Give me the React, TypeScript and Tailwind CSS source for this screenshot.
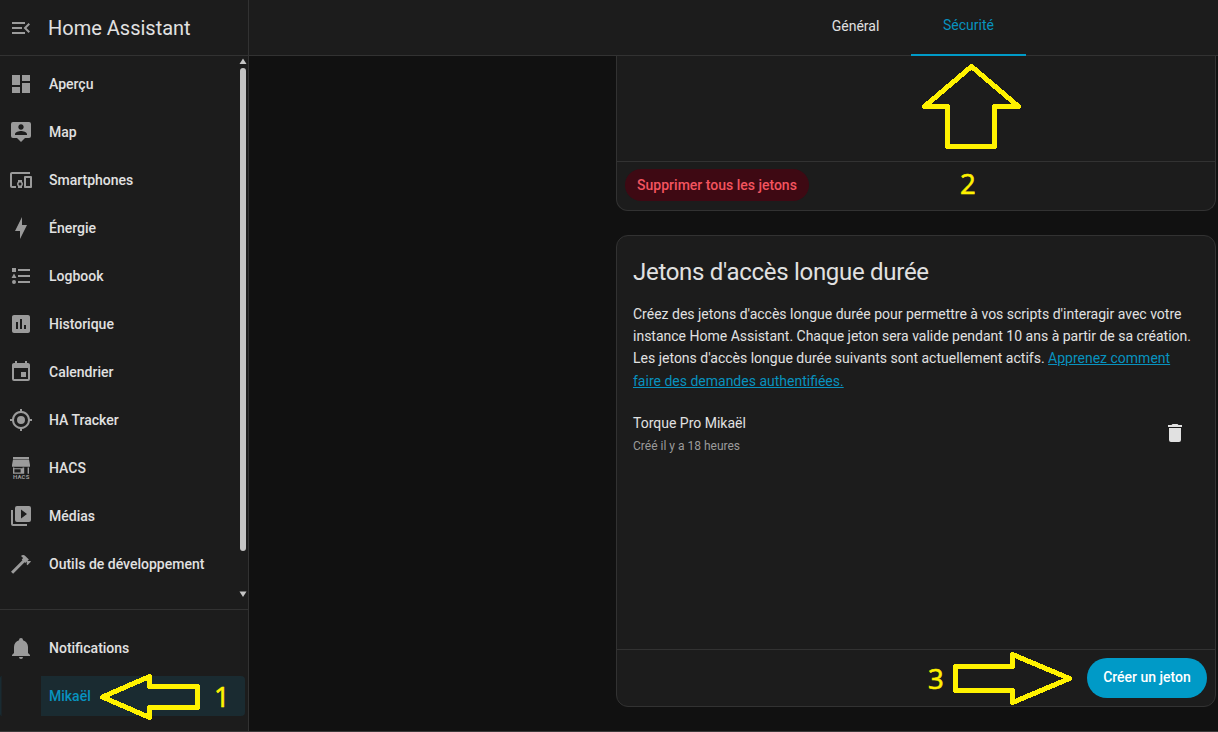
import type { ReactNode } from "react";

const icons = {
  menu: "M21,15.61L19.59,17L14.58,12L19.59,7L21,8.39L17.44,12L21,15.61M3,6H16V8H3V6M3,13V11H13V13H3M3,18V16H16V18H3Z",
  dashboard: "M13,3V9H21V3M13,21H21V11H13M3,21H11V15H3M3,13H11V3H3V13Z",
  map: "M20,2H4A2,2 0 0,0 2,4V16A2,2 0 0,0 4,18H8L12,22L16,18H20A2,2 0 0,0 22,16V4A2,2 0 0,0 20,2M12,4.3C13.5,4.3 14.7,5.5 14.7,7C14.7,8.5 13.5,9.7 12,9.7C10.5,9.7 9.3,8.5 9.3,7C9.3,5.5 10.5,4.3 12,4.3M18,15H6V14.1C6,12.1 10,11 12,11C14,11 18,12.1 18,14.1V15Z",
  devices:
    "M3 6h18V4H3c-1.1 0-2 .9-2 2v12c0 1.1.9 2 2 2h4v-2H3V6zm10 6H9v1.78c-.61.55-1 1.33-1 2.22s.39 1.67 1 2.22V20h4v-1.78c.61-.55 1-1.34 1-2.22s-.39-1.67-1-2.22V12zm-2 5.5c-.83 0-1.5-.67-1.5-1.5s.67-1.5 1.5-1.5 1.5.67 1.5 1.5-.67 1.5-1.5 1.5zM22 8h-6c-.5 0-1 .5-1 1v10c0 .5.5 1 1 1h6c.5 0 1-.5 1-1V9c0-.5-.5-1-1-1zm-1 10h-4v-8h4v8z",
  bolt: "M11 15H6L13 1V9H18L11 23V15Z",
  logbook:
    "M5,9.5L7.5,14H2.5L5,9.5M3,4H7V8H3V4M5,20A2,2 0 0,0 7,18A2,2 0 0,0 5,16A2,2 0 0,0 3,18A2,2 0 0,0 5,20M9,5V7H21V5H9M9,19H21V17H9V19M9,11V13H21V11H9Z",
  chart:
    "M19 3H5C3.9 3 3 3.9 3 5V19C3 20.1 3.9 21 5 21H19C20.1 21 21 20.1 21 19V5C21 3.9 20.1 3 19 3M9 17H7V10H9V17M13 17H11V7H13V17M17 17H15V13H17V17Z",
  calendar:
    "M19,19H5V8H19M16,1V3H8V1H6V3H5C3.89,3 3,3.89 3,5V19A2,2 0 0,0 5,21H19A2,2 0 0,0 21,19V5C21,3.89 20.1,3 19,3H18V1M17,12H12V17H17V12Z",
  tracker:
    "M12,8A4,4 0 0,1 16,12A4,4 0 0,1 12,16A4,4 0 0,1 8,12A4,4 0 0,1 12,8M3.05,13H1V11H3.05C3.5,6.83 6.83,3.5 11,3.05V1H13V3.05C17.17,3.5 20.5,6.83 20.95,11H23V13H20.95C20.5,17.17 17.17,20.5 13,20.95V23H11V20.95C6.83,20.5 3.5,17.17 3.05,13M12,5A7,7 0 0,0 5,12A7,7 0 0,0 12,19A7,7 0 0,0 19,12A7,7 0 0,0 12,5Z",
  media:
    "M4,6H2V20A2,2 0 0,0 4,22H18V20H4V6M20,2H8A2,2 0 0,0 6,4V16A2,2 0 0,0 8,18H20A2,2 0 0,0 22,16V4A2,2 0 0,0 20,2M12,14.5V5.5L18,10L12,14.5Z",
  hammer:
    "M2 19.63L13.43 8.2L12.72 7.5L14.14 6.07L12 3.89C13.2 2.7 15.09 2.7 16.27 3.89L19.87 7.5L18.45 8.91H21.29L22 9.62L18.45 13.21L17.74 12.5V9.62L16.27 11.04L15.56 10.33L4.13 21.76L2 19.63Z",
  bell: "M21,19V20H3V19L5,17V11C5,7.9 7.03,5.17 10,4.29C10,4.19 10,4.1 10,4A2,2 0 0,1 12,2A2,2 0 0,1 14,4C14,4.1 14,4.19 14,4.29C16.97,5.17 19,7.9 19,11V17L21,19M14,21A2,2 0 0,1 12,23A2,2 0 0,1 10,21",
  trash: "M19,4H15.5L14.5,3H9.5L8.5,4H5V6H19M6,19A2,2 0 0,0 8,21H16A2,2 0 0,0 18,19V7H6V19Z",
};

function Icon({ d, className = "text-[#9b9b9b]" }: { d: string; className?: string }) {
  return (
    <svg viewBox="0 0 24 24" className={`size-6 shrink-0 ${className}`}>
      <path d={d} fill="currentColor" fillRule="evenodd" />
    </svg>
  );
}

function HacsIcon() {
  return (
    <svg viewBox="0 0 24 24" className="size-6 shrink-0 overflow-visible text-[#9b9b9b]">
      <path
        fill="currentColor"
        fillRule="evenodd"
        d="M4 1H20V3H4ZM4 3.6H20L21 9V10.8H3V9ZM4 11.5H5.3V12.3H13.5V11.5H15.2V17.7H4ZM18.6 11.5H20V17.7H18.6ZM5.4 13.2V16.4H11.6V13.2Z"
      />
      <text x="12.3" y="23.4" textAnchor="middle" fontSize="6" fontWeight="700" letterSpacing="0.2" fill="currentColor">
        HACS
      </text>
    </svg>
  );
}

function NavItem({ icon, label }: { icon: ReactNode; label: string }) {
  return (
    <li className="flex h-12 items-center gap-4 pl-[9px]">
      {icon}
      <span>{label}</span>
    </li>
  );
}

const items: { label: string; d?: string }[] = [
  { label: "Aperçu", d: icons.dashboard },
  { label: "Map", d: icons.map },
  { label: "Smartphones", d: icons.devices },
  { label: "Énergie", d: icons.bolt },
  { label: "Logbook", d: icons.logbook },
  { label: "Historique", d: icons.chart },
  { label: "Calendrier", d: icons.calendar },
  { label: "HA Tracker", d: icons.tracker },
  { label: "HACS" },
  { label: "Médias", d: icons.media },
  { label: "Outils de développement", d: icons.hammer },
];

function Sidebar() {
  return (
    <aside className="flex w-[249px] shrink-0 flex-col border-r border-[#323232] bg-[#1c1c1c]">
      <div className="flex h-14 shrink-0 items-center gap-[15px] border-b border-[#323232] pl-[9px]">
        <Icon d={icons.menu} />
        <span className="text-[20px] text-[#e1e1e1]">Home Assistant</span>
      </div>
      <div className="flex h-[553px] shrink-0 justify-between pr-px">
        <ul className="pt-1 text-sm font-medium text-[#e1e1e1]">
          {items.map((i) => (
            <NavItem key={i.label} label={i.label} icon={i.d ? <Icon d={i.d} /> : <HacsIcon />} />
          ))}
        </ul>
        <div className="flex w-2 flex-col items-center pt-[2px] text-[#c4c4c4]">
          <svg viewBox="0 0 8 7" className="h-[7px] w-2">
            <path d="M4 0.5L7.5 6H0.5Z" fill="currentColor" />
          </svg>
          <div className="mt-[3px] h-[483px] w-[6px] rounded-full bg-[#c4c4c4]" />
          <svg viewBox="0 0 8 7" className="mt-10 h-[7px] w-2">
            <path d="M0.5 0.5H7.5L4 6Z" fill="currentColor" />
          </svg>
        </div>
      </div>
      <ul className="border-t border-[#323232] pt-[14px] text-sm font-medium text-[#e1e1e1]">
        <NavItem label="Notifications" icon={<Icon d={icons.bell} />} />
        <li className="mt-1 flex h-10 items-center justify-between pr-[3px]">
          <div className="h-10 w-[2px] rounded-l border-l border-[#192b32] bg-[#1a2327]" />
          <div className="flex h-10 w-[204px] items-center rounded-r bg-[#1a2b31] pl-2 text-[#0892bf]">Mikaël</div>
        </li>
      </ul>
    </aside>
  );
}

function Annotations() {
  return (
    <>
      <svg
        viewBox="0 0 1218 732"
        className="pointer-events-none absolute inset-0 h-[732px] w-[1218px]"
        fill="none"
        stroke="#fff200"
        strokeWidth="5"
        strokeLinejoin="round"
        shapeRendering="crispEdges"
      >
        <path d="M971.5 66.5L1018.5 106.5H994.5V146.5H947.5V106.5H924.5Z" />
        <path d="M102.5 697L149.5 676.5V686.5H197.5V707.5H149.5V717.5Z" />
        <path d="M955.5 666.5H1012.5V654.5L1069.5 678.5L1012.5 702.5V690.5H955.5Z" />
      </svg>
      <div className="pointer-events-none absolute inset-0 font-['Open_Sans',sans-serif] text-[27.5px] leading-[28px] text-[#fff200] [-webkit-text-stroke:0.6px_#fff200]">
        <span className="absolute left-[214px] top-[683px]">1</span>
        <span className="absolute left-[960px] top-[170px]">2</span>
        <span className="absolute left-[928px] top-[665px]">3</span>
      </div>
    </>
  );
}

export default function App() {
  return (
    <div className="relative flex h-[732px] w-[1218px] flex-col overflow-hidden bg-[#111111] font-[Roboto,sans-serif] text-[#e1e1e1]">
      <div className="flex h-[731px] shrink-0">
        <Sidebar />
        <main className="flex min-w-0 flex-1 flex-col">
          <nav className="flex h-14 shrink-0 border-b border-[#323232] bg-[#1c1c1c] pl-[551px] text-sm">
            <div className="flex h-14 w-[111px] shrink-0 items-center justify-center pb-1 text-[#e1e1e1]">Général</div>
            <div className="flex h-14 w-[115px] shrink-0 items-center justify-center border-b-2 border-[#009ac7] pb-1 text-[#0892bf]">
              Sécurité
            </div>
          </nav>
          <div className="ml-[367px] flex w-[600px] flex-col gap-6">
            <section className="flex h-[155px] flex-col justify-end rounded-b-xl border border-t-0 border-[#323232] bg-[#1c1c1c]">
              <div className="h-[49px] border-t border-[#323232] px-2 pt-[7px]">
                <button className="h-8 w-[184px] rounded-full bg-[#3e0913] text-sm font-medium text-[#f3545f]">
                  Supprimer tous les jetons
                </button>
              </div>
            </section>
            <section className="flex h-[472px] flex-col rounded-xl border border-[#323232] bg-[#1c1c1c]">
              <h1 className="px-4 pt-3 text-2xl leading-[48px] tracking-[-0.288px]">Jetons d'accès longue durée</h1>
              <div className="flex-1 px-4 pt-[6.5px]">
                <p className="text-sm leading-[22.4px]">
                  Créez des jetons d'accès longue durée pour permettre à vos scripts d'interagir avec votre
                  <br />
                  instance Home Assistant. Chaque jeton sera valide pendant 10 ans à partir de sa création.
                  <br />
                  Les jetons d'accès longue durée suivants sont actuellement actifs.{" "}
                  <a className="text-[#0892bf] underline">
                    Apprenez comment
                    <br />
                    faire des demandes authentifiées.
                  </a>
                </p>
                <div className="mt-[20px] flex items-start justify-between pr-3">
                  <div>
                    <div className="text-sm leading-[22px]">Torque Pro Mikaël</div>
                    <div className="text-xs leading-6 text-[#9b9b9b]">Créé il y a 18 heures</div>
                  </div>
                  <Icon d={icons.trash} className="mt-[8.9px] text-[#e1e1e1]" />
                </div>
              </div>
              <div className="flex h-[57px] justify-end border-t border-[#323232] px-2 pt-2">
                <button className="h-10 w-[120px] rounded-full bg-[#009ac7] pb-[2px] text-sm font-medium text-white">
                  Créer un jeton
                </button>
              </div>
            </section>
          </div>
        </main>
      </div>
      <div className="h-px shrink-0 bg-[#3c3a3b]" />
      <Annotations />
    </div>
  );
}
